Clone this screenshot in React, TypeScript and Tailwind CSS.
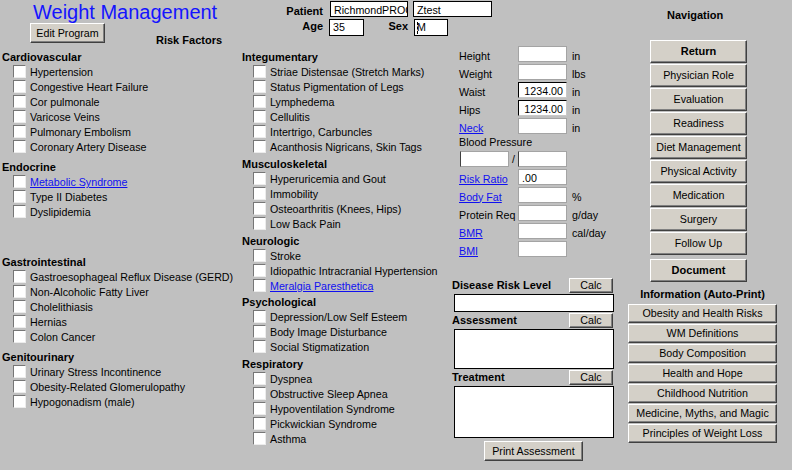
import React from "react";

const btn =
  "bg-[#d4d0c8] border border-t-white border-l-white border-b-[#404040] border-r-[#404040] shadow-[inset_-1px_-1px_0_#808080] flex items-center justify-center text-[10.7px] leading-none text-black whitespace-nowrap p-0";

const txt = "text-[10.7px] leading-[15px] whitespace-nowrap";
const head = "h-[15px] pl-[2px] text-[11px] leading-[15px] font-bold whitespace-nowrap";
const link = "text-[#1010f0] underline";

function Item({ label, isLink }: { label: string; isLink?: boolean }) {
  return (
    <div className="flex items-start h-[15px]">
      <span className="ml-[13px] w-[13px] h-[13px] shrink-0 bg-white border border-t-[#767676] border-l-[#767676] border-b-[#ececec] border-r-[#ececec]" />
      <span className={isLink ? "ml-[4px] " + txt + " " + link : "ml-[4px] " + txt}>{label}</span>
    </div>
  );
}

function Section({ title, items, links = [], mt }: { title: string; items: string[]; links?: string[]; mt: string }) {
  return (
    <div className={mt}>
      <div className={head}>{title}</div>
      {items.map((it) => (
        <Item key={it} label={it} isLink={links.includes(it)} />
      ))}
    </div>
  );
}

function MRow({
  label,
  unit,
  value,
  isLink,
  dark,
}: {
  label: string;
  unit?: string;
  value?: string;
  isLink?: boolean;
  dark?: boolean;
}) {
  return (
    <div className="flex h-[18px]">
      <div
        className={
          isLink
            ? "w-[68px] pl-[9px] pt-[2.5px] text-[10.7px] leading-[15px] whitespace-nowrap"
            : "w-[68px] pl-[9px] pt-[2.5px] text-[10.7px] leading-[15px] whitespace-nowrap"
        }
      >
        <span className={isLink ? link : ""}>{label}</span>
      </div>
      <div
        className={
          dark
            ? "w-[49px] h-[16px] bg-white border border-t-black border-l-black border-b-[#c8c8c8] border-r-[#c8c8c8] text-[10.7px] leading-[14px] pt-[1px] text-right pr-[3px]"
            : "w-[49px] h-[16px] bg-white border border-[#a4a4a4] text-[10.7px] leading-[14px] pt-[1px] pl-[3px]"
        }
      >
        {value}
      </div>
      <div className="pl-[5px] pt-[2.5px] text-[10.7px] leading-[15px] whitespace-nowrap">{unit}</div>
    </div>
  );
}

export default function App() {
  return (
    <div className="w-[792px] h-[470px] bg-[#c0c0c0] flex overflow-hidden text-black font-['Liberation_Sans',Arial,sans-serif]">
      {/* main area */}
      <div className="w-[620px] shrink-0 flex flex-col">
        {/* header */}
        <div className="h-[45px] flex shrink-0">
          <div className="w-[280px] shrink-0">
            <div className="pl-[33px] pt-[1px] h-[23px] text-[20px] leading-[22px] text-[#1414ff] whitespace-nowrap">
              Weight Management
            </div>
            <div className="flex items-start">
              <button className={btn + " ml-[30px] w-[75px] h-[20px]"}>Edit Program</button>
              <div className="ml-[51px] mt-[10px] text-[11px] leading-[15px] font-bold whitespace-nowrap">Risk Factors</div>
            </div>
          </div>
          <div className="flex flex-col pt-[1px]">
            <div className="flex items-start h-[18px]">
              <div className="w-[43px] text-right mt-[2.5px] text-[11px] leading-[15px] font-bold">Patient</div>
              <div className="ml-[7px] w-[78px] h-[16px] bg-white border border-black overflow-hidden pl-[3px] pt-[1px] text-[10.7px] leading-[14px] whitespace-nowrap">
                RichmondPROC
              </div>
              <div className="ml-[5px] w-[79px] h-[16px] bg-white border border-black overflow-hidden pl-[3px] pt-[1px] text-[10.7px] leading-[14px] whitespace-nowrap">
                Ztest
              </div>
            </div>
            <div className="flex items-start h-[17px]">
              <div className="w-[43px] text-right text-[11px] leading-[15px] font-bold">Age</div>
              <div className="ml-[6px] w-[35px] h-[17px] bg-white border border-black pl-[3px] text-[10.7px] leading-[15px]">35</div>
              <div className="w-[44px] text-right text-[11px] leading-[15px] font-bold">Sex</div>
              <div className="ml-[6px] w-[34px] h-[17px] bg-white border border-black pl-[2px] text-[10.7px] leading-[15px] flex items-center">
                <span className="inline-block w-px h-[12px] border-l border-dashed border-black mr-[-1px]" />
                <span>M</span>
              </div>
            </div>
          </div>
        </div>

        {/* body */}
        <div className="flex">
          {/* column 1 */}
          <div className="w-[240px] shrink-0 pt-[5px]">
            <Section
              mt="mt-0"
              title="Cardiovascular"
              items={[
                "Hypertension",
                "Congestive Heart Failure",
                "Cor pulmonale",
                "Varicose Veins",
                "Pulmonary Embolism",
                "Coronary Artery Disease",
              ]}
            />
            <Section
              mt="mt-[5px]"
              title="Endocrine"
              items={["Metabolic Syndrome", "Type II Diabetes", "Dyslipidemia"]}
              links={["Metabolic Syndrome"]}
            />
            <Section
              mt="mt-[35px]"
              title="Gastrointestinal"
              items={[
                "Gastroesophageal Reflux Disease (GERD)",
                "Non-Alcoholic Fatty Liver",
                "Cholelithiasis",
                "Hernias",
                "Colon Cancer",
              ]}
            />
            <Section
              mt="mt-[5px]"
              title="Genitourinary"
              items={["Urinary Stress Incontinence", "Obesity-Related Glomerulopathy", "Hypogonadism (male)"]}
            />
          </div>

          {/* column 2 */}
          <div className="w-[210px] shrink-0 pt-[5px]">
            <Section
              mt="mt-0"
              title="Integumentary"
              items={[
                "Striae Distensae (Stretch Marks)",
                "Status Pigmentation of Legs",
                "Lymphedema",
                "Cellulitis",
                "Intertrigo, Carbuncles",
                "Acanthosis Nigricans, Skin Tags",
              ]}
            />
            <Section
              mt="mt-[2px]"
              title="Musculoskeletal"
              items={["Hyperuricemia and Gout", "Immobility", "Osteoarthritis (Knees, Hips)", "Low Back Pain"]}
            />
            <Section
              mt="mt-[2px]"
              title="Neurologic"
              items={["Stroke", "Idiopathic Intracranial Hypertension", "Meralgia Paresthetica"]}
              links={["Meralgia Paresthetica"]}
            />
            <Section
              mt="mt-[1px]"
              title="Psychological"
              items={["Depression/Low Self Esteem", "Body Image Disturbance", "Social Stigmatization"]}
            />
            <Section
              mt="mt-[2px]"
              title="Respiratory"
              items={[
                "Dyspnea",
                "Obstructive Sleep Apnea",
                "Hypoventilation Syndrome",
                "Pickwickian Syndrome",
                "Asthma",
              ]}
            />
          </div>

          {/* column 3 */}
          <div className="w-[170px] shrink-0 pt-[1px]">
            <MRow label="Height" unit="in" />
            <MRow label="Weight" unit="lbs" />
            <MRow label="Waist" unit="in" value="1234.00" dark />
            <MRow label="Hips" unit="in" value="1234.00" dark />
            <MRow label="Neck" unit="in" isLink />
            <div className="mt-[-1px] h-[15px] pl-[9px] text-[10.7px] leading-[15px] whitespace-nowrap">Blood Pressure</div>
            <div className="mt-[1px] flex h-[16px]">
              <div className="ml-[10px] w-[49px] h-[16px] bg-white border border-[#a4a4a4] border-l-[#404040]" />
              <div className="w-[9px] text-center text-[10.7px] leading-[16px]">/</div>
              <div className="w-[49px] h-[16px] bg-white border border-[#a4a4a4] border-l-[#404040]" />
            </div>
            <div className="mt-[2px]">
              <MRow label="Risk Ratio" value=".00" isLink />
              <MRow label="Body Fat" unit="%" isLink />
              <MRow label="Protein Req" unit="g/day" />
              <MRow label="BMR" unit="cal/day" isLink />
              <MRow label="BMI" isLink />
            </div>

            <div className="mt-[19px] flex h-[15px]">
              <div className="w-[119px] pl-[2px] text-[11px] leading-[15px] font-bold whitespace-nowrap">Disease Risk Level</div>
              <button className={btn + " w-[44px] h-[15px]"}>Calc</button>
            </div>
            <div className="mt-[1px] ml-[4px] w-[160px] h-[18px] bg-white border border-black" />

            <div className="mt-[1px] flex h-[15px]">
              <div className="w-[119px] pl-[2px] text-[11px] leading-[15px] font-bold whitespace-nowrap">Assessment</div>
              <button className={btn + " w-[44px] h-[15px]"}>Calc</button>
            </div>
            <div className="mt-[1px] ml-[4px] w-[160px] h-[40px] bg-white border border-black" />

            <div className="mt-[1px] flex h-[15px]">
              <div className="w-[119px] pl-[2px] text-[11px] leading-[15px] font-bold whitespace-nowrap">Treatment</div>
              <button className={btn + " w-[44px] h-[15px]"}>Calc</button>
            </div>
            <div className="mt-[1px] ml-[4px] w-[160px] h-[52px] bg-white border border-black" />

            <button className={btn + " mt-[3px] ml-[34px] w-[99px] h-[20px]"}>Print Assessment</button>
          </div>
        </div>
      </div>

      {/* navigation */}
      <div className="w-[172px] shrink-0 flex flex-col">
        <div className="pt-[8px] pl-[47px] h-[23px] text-[11px] leading-[15px] font-bold whitespace-nowrap">Navigation</div>
        <div className="mt-[17px] ml-[30px] w-[97px] flex flex-col gap-[1px]">
          <button className={btn + " h-[23px] w-full font-bold text-[11px]"}>Return</button>
          {["Physician Role", "Evaluation", "Readiness", "Diet Management", "Physical Activity", "Medication", "Surgery", "Follow Up"].map(
            (b) => (
              <button key={b} className={btn + " h-[23px] w-full"}>
                {b}
              </button>
            )
          )}
          <button className={btn + " mt-[3px] h-[23px] w-full font-bold text-[11px]"}>Document</button>
        </div>
        <div className="mt-[5px] ml-[8px] w-[149px] text-center h-[15px] text-[11px] leading-[15px] font-bold whitespace-nowrap">
          Information (Auto-Print)
        </div>
        <div className="mt-[2px] ml-[8px] w-[149px] flex flex-col gap-[1px]">
          {[
            "Obesity and Health Risks",
            "WM Definitions",
            "Body Composition",
            "Health and Hope",
            "Childhood Nutrition",
            "Medicine, Myths, and Magic",
            "Principles of Weight Loss",
          ].map((b) => (
            <button key={b} className={btn + " h-[19px] w-full"}>
              {b}
            </button>
          ))}
        </div>
      </div>
    </div>
  );
}
